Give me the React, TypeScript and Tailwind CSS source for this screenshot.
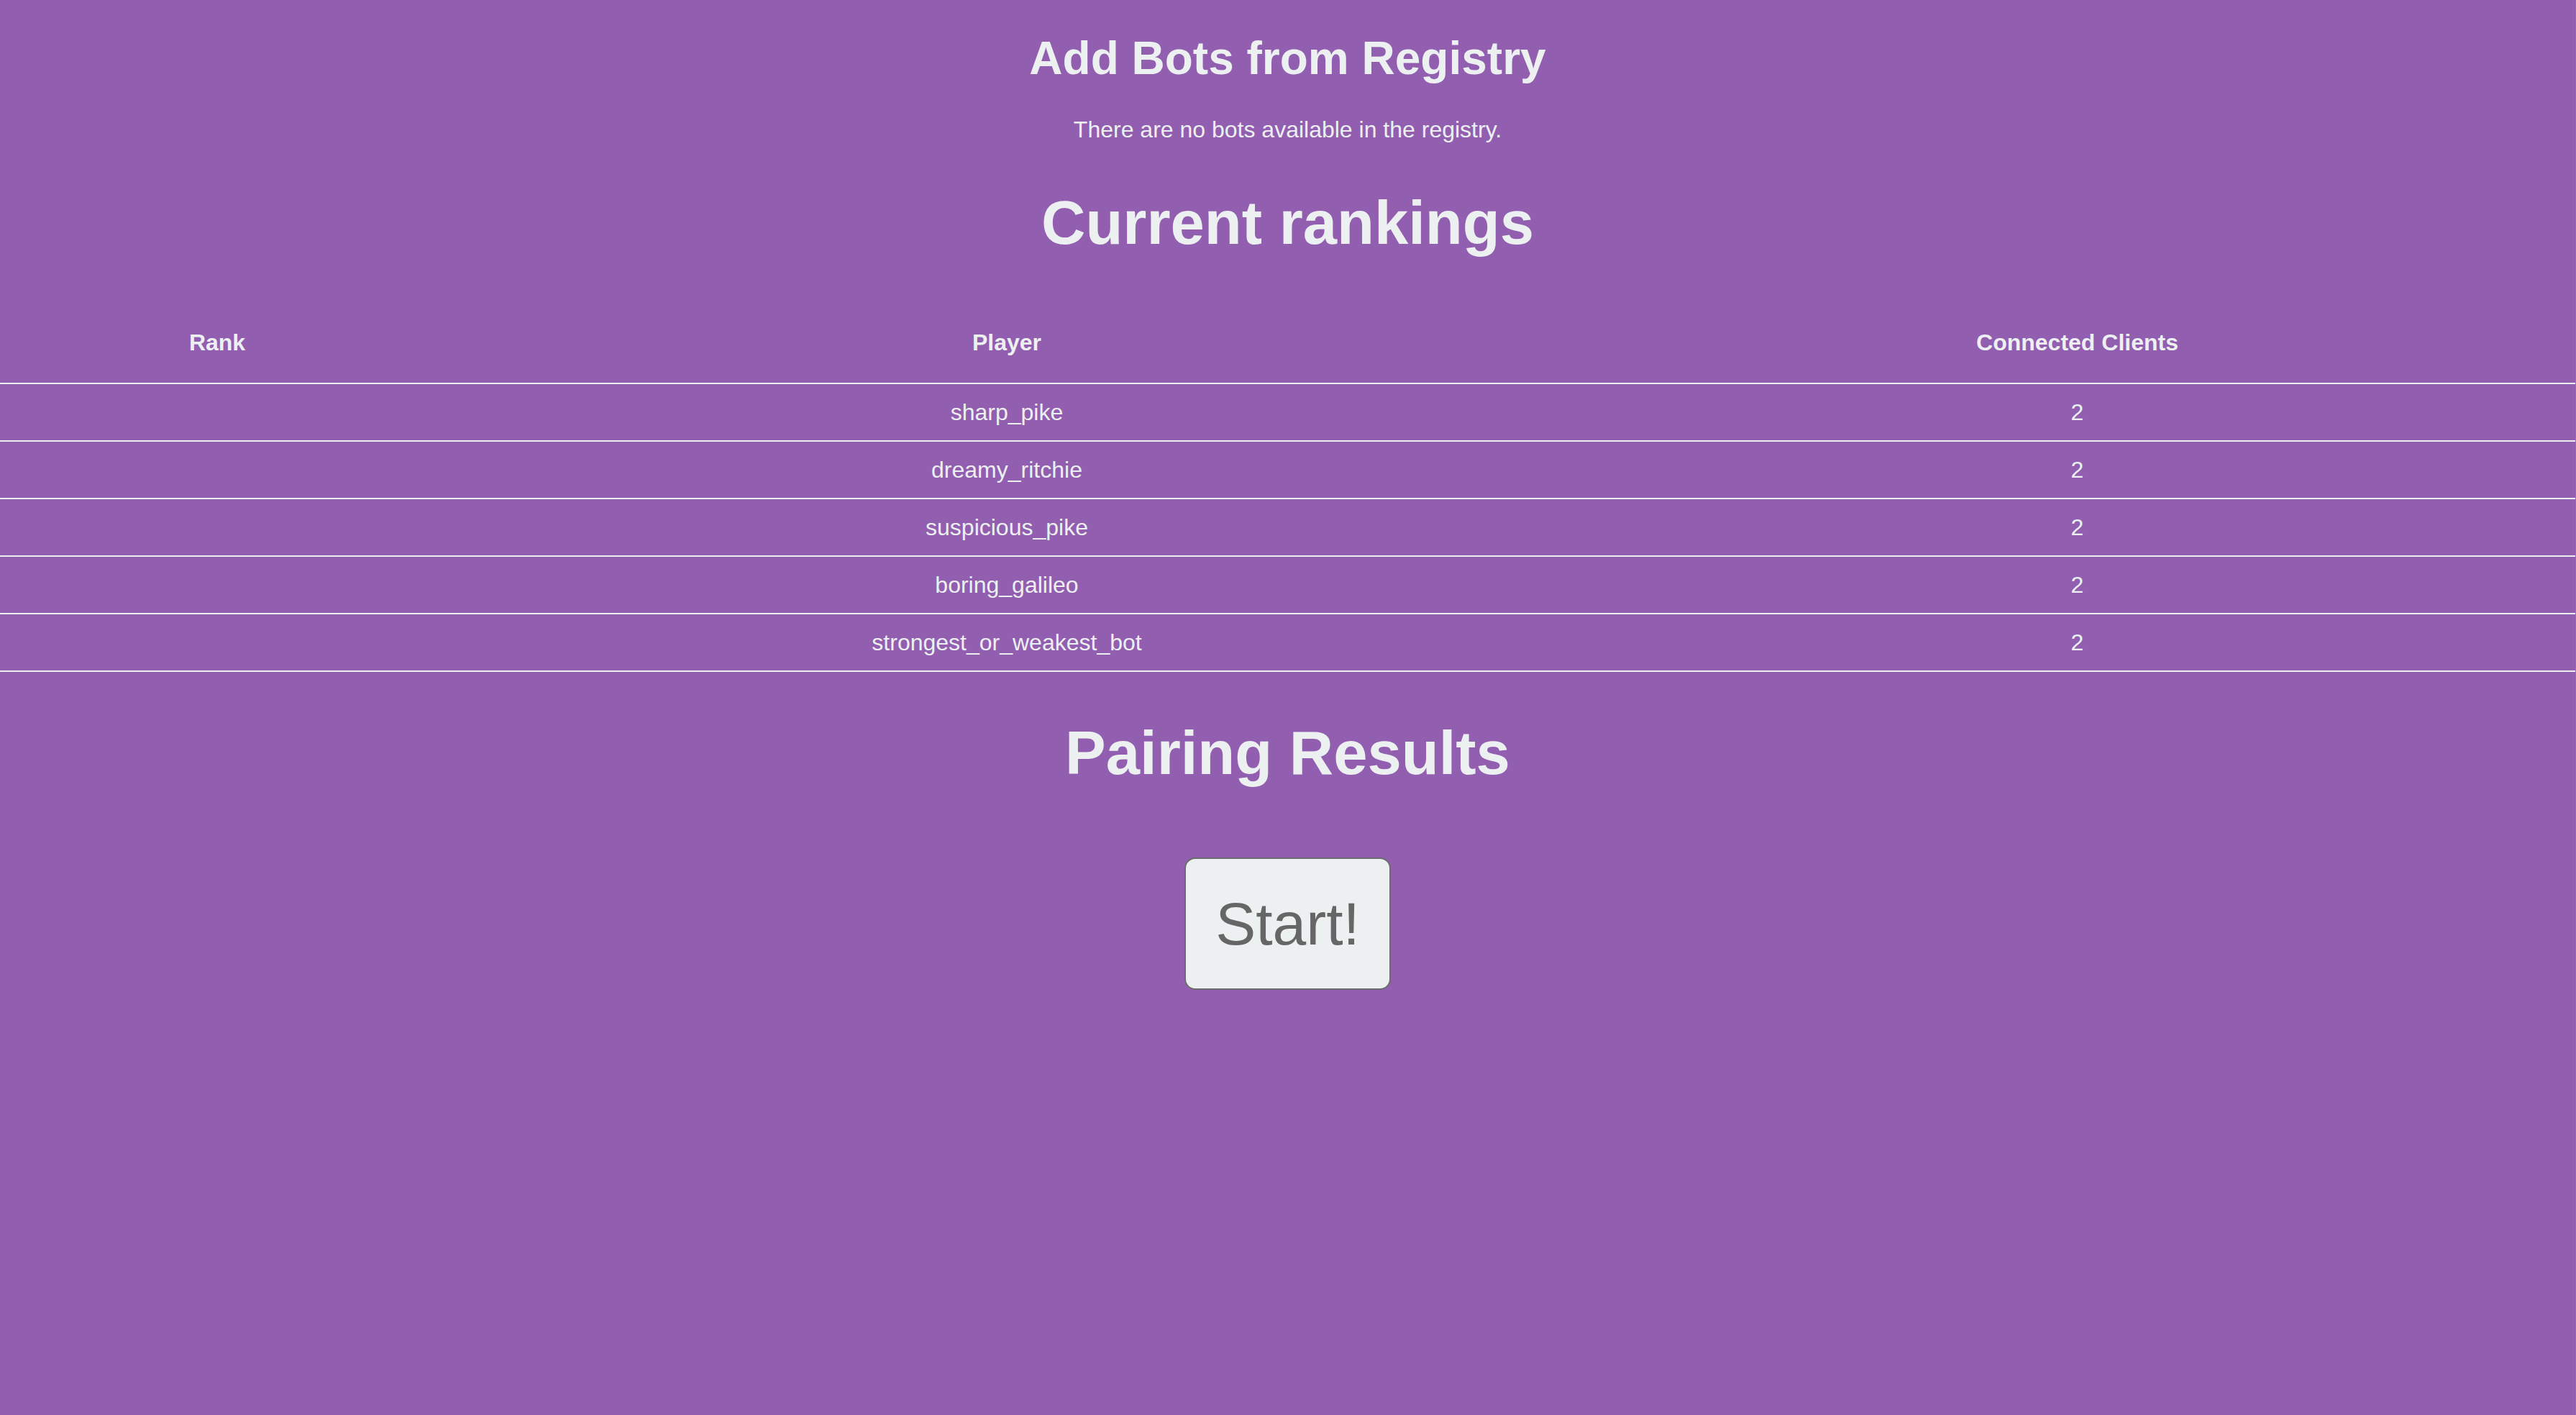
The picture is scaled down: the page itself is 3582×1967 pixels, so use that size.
const players = [
  { name: "sharp_pike", clients: 2 },
  { name: "dreamy_ritchie", clients: 2 },
  { name: "suspicious_pike", clients: 2 },
  { name: "boring_galileo", clients: 2 },
  { name: "strongest_or_weakest_bot", clients: 2 },
];

export default function App() {
  return (
    <div
      className="min-h-screen w-full border-r border-[#9b68b9] bg-[#925eb0] pt-[43px] text-center text-[#ecf0f1]"
      style={{ fontFamily: '"Liberation Sans", Arial, sans-serif' }}
    >
      <h2 className="text-[64px] font-bold leading-[76px]">Add Bots from Registry</h2>
      <p className="mt-[42px] text-[32px] leading-[38px]">
        There are no bots available in the registry.
      </p>

      <h1 className="mt-[61px] text-[85px] font-bold leading-[100px]">Current rankings</h1>

      <table className="mt-[60px] w-full border-collapse text-[32px] leading-[38px]">
        <thead>
          <tr className="border-b-2 border-[#ecf0f1]">
            <th className="w-[604px] pt-[37px] pb-[37px] font-bold">Rank</th>
            <th className="w-[1592px] pt-[37px] pb-[37px] font-bold">Player</th>
            <th className="pt-[37px] pb-[37px] font-bold">Connected Clients</th>
          </tr>
        </thead>
        <tbody>
          {players.map((p) => (
            <tr key={p.name} className="border-b-2 border-[#ecf0f1]">
              <td className="py-[20px]"></td>
              <td className="py-[20px]">{p.name}</td>
              <td className="py-[20px]">{p.clients}</td>
            </tr>
          ))}
        </tbody>
      </table>

      <h1 className="mt-[63px] text-[85px] font-bold leading-[100px]">Pairing Results</h1>

      <div className="mt-[95px] flex justify-center">
        <button className="rounded-[15px] border-2 border-[#6c6c6c] bg-[#ecf0f1] px-[41px] py-[41px] text-[84px] leading-[98px] text-[#666666]">
          Start!
        </button>
      </div>
    </div>
  );
}
